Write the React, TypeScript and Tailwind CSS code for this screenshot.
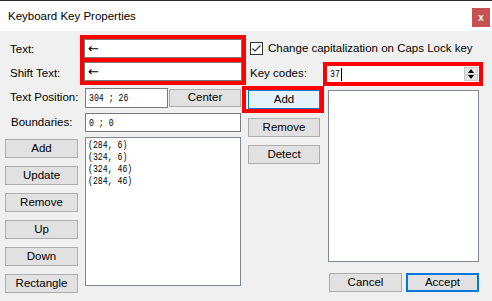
import React from "react";

function Btn({ children, className }: { children: React.ReactNode; className: string }) {
  return (
    <div className={`flex items-center justify-center bg-[#e1e1e1] border border-[#adadad] shrink-0 ${className}`}>
      {children}
    </div>
  );
}

function Mono({ children }: { children: React.ReactNode }) {
  return (
    <span className="block origin-left scale-x-[0.78] font-['Liberation_Mono',monospace] text-[10.5px] leading-[12px] whitespace-pre">
      {children}
    </span>
  );
}

export default function App() {
  return (
    <div className="w-[492px] h-[301px] bg-[#f0f0f0] flex flex-col overflow-hidden font-['Liberation_Sans',sans-serif] text-[11.5px] text-black leading-none">
      {/* title bar */}
      <div className="h-[31px] shrink-0 bg-white border-t border-[#2b2b2b] flex items-start justify-between">
        <div className="pl-[8px] pt-[10px]">Keyboard Key Properties</div>
        <div className="mt-[7px] mr-[2px] w-[18px] h-[19px] bg-[#c75050] text-white text-[10px] font-bold flex items-center justify-center">
          x
        </div>
      </div>

      {/* body */}
      <div className="flex flex-1">
        {/* left block */}
        <div className="w-[242px] shrink-0 pl-[5px] flex flex-col">
          <div className="flex mt-[4px]">
            <div className="w-[75px] shrink-0 pl-[5px] pt-[7px] flex flex-col gap-[10px]">
              <div className="h-[14px] leading-[14px]">Text:</div>
              <div className="h-[14px] leading-[14px]">Shift Text:</div>
            </div>
            <div className="w-[166px] h-[50px] shrink-0 border-4 border-[#ff0000] flex flex-col">
              <div className="h-[19px] bg-white border border-[#7a7a7a] flex items-center pl-[3px] font-['DejaVu_Sans',sans-serif] text-[13px]">←</div>
              <div className="h-[4px] bg-[#ff0000]" />
              <div className="h-[19px] bg-white border border-[#7a7a7a] flex items-center pl-[3px] font-['DejaVu_Sans',sans-serif] text-[13px]">←</div>
            </div>
          </div>

          <div className="flex items-center mt-[3px]">
            <div className="w-[80px] shrink-0 pl-[5px]">Text Position:</div>
            <div className="w-[83px] h-[20px] shrink-0 bg-white border border-[#7a7a7a] flex items-center pl-[3px]">
              <Mono>304 ; 26</Mono>
            </div>
            <Btn className="ml-[1px] w-[72px] h-[18px]">Center</Btn>
          </div>

          <div className="flex items-center mt-[5px]">
            <div className="w-[80px] shrink-0 pl-[6px]">Boundaries:</div>
            <div className="w-[156px] h-[19px] shrink-0 bg-white border border-[#7a7a7a] flex items-center pl-[3px]">
              <Mono>0 ; 0</Mono>
            </div>
          </div>

          <div className="flex mt-[5px]">
            <div className="w-[73px] shrink-0 flex flex-col gap-[8px] pt-[2px]">
              <Btn className="w-[73px] h-[19px]">Add</Btn>
              <Btn className="w-[73px] h-[19px]">Update</Btn>
              <Btn className="w-[73px] h-[19px]">Remove</Btn>
              <Btn className="w-[73px] h-[19px]">Up</Btn>
              <Btn className="w-[73px] h-[19px]">Down</Btn>
              <Btn className="w-[73px] h-[19px]">Rectangle</Btn>
            </div>
            <div className="ml-[7px] w-[156px] h-[149px] shrink-0 bg-white border border-[#828790] pl-[2px] pt-[1px] flex flex-col">
              <Mono>(284, 6)</Mono>
              <Mono>(324, 6)</Mono>
              <Mono>(324, 46)</Mono>
              <Mono>(284, 46)</Mono>
            </div>
          </div>
        </div>

        {/* right block */}
        <div className="w-[250px] shrink-0 flex flex-col">
          <div className="flex items-center mt-[11px] pl-[8px]">
            <div className="w-[13px] h-[13px] bg-white border border-[#333333] flex items-center justify-center">
              <svg width="11" height="11" viewBox="0 0 11 11">
                <path d="M1.5 5.5 L4 8 L9.5 2.5" fill="none" stroke="#333333" strokeWidth="1.2" />
              </svg>
            </div>
            <div className="ml-[5px] whitespace-nowrap">Change capitalization on Caps Lock key</div>
          </div>

          <div className="flex items-center mt-[7px]">
            <div className="w-[81px] shrink-0 pl-[8px]">Key codes:</div>
            <div className="w-[160px] h-[24px] shrink-0 border-4 border-[#ff0000] bg-white flex items-center">
              <div className="flex-1 flex items-center pl-[3px]">
                <span className="inline-block font-['Liberation_Mono',monospace] text-[10.5px] leading-[12px] origin-left scale-x-[0.78] w-[11px]">37</span>
                <div className="w-[1px] h-[13px] bg-black" />
              </div>
              <div className="mr-[1px] w-[14px] h-[14px] flex flex-col border border-[#c8c8c8]">
                <div className="flex-1 bg-[#e6e6e6] flex items-center justify-center border-b border-[#c8c8c8]">
                  <svg width="6" height="4" viewBox="0 0 6 4"><path d="M0 4 L3 0 L6 4 Z" fill="#000" /></svg>
                </div>
                <div className="flex-1 bg-[#e6e6e6] flex items-center justify-center">
                  <svg width="6" height="4" viewBox="0 0 6 4"><path d="M0 0 L3 4 L6 0 Z" fill="#000" /></svg>
                </div>
              </div>
            </div>
          </div>

          <div className="flex">
            <div className="w-[86px] shrink-0 flex flex-col">
              <div className="w-[82px] h-[27px] border-4 border-[#ff0000] pl-[2px]">
                <div className="w-[72px] h-[19px] bg-[#e5f1fb] border border-[#0078d7] flex items-center justify-center">Add</div>
              </div>
              <Btn className="mt-[5px] ml-[6px] w-[72px] h-[19px]">Remove</Btn>
              <Btn className="mt-[8px] ml-[6px] w-[72px] h-[19px]">Detect</Btn>
            </div>
            <div className="flex flex-col mt-[4px]">
              <div className="w-[151px] h-[172px] bg-white border border-[#828790]" />
              <div className="flex gap-[4px] mt-[11px] pl-[1px]">
                <Btn className="w-[73px] h-[19px]">Cancel</Btn>
                <div className="w-[73px] h-[19px] bg-[#e1e1e1] border-2 border-[#0078d7] flex items-center justify-center">Accept</div>
              </div>
            </div>
          </div>
        </div>
      </div>
    </div>
  );
}
